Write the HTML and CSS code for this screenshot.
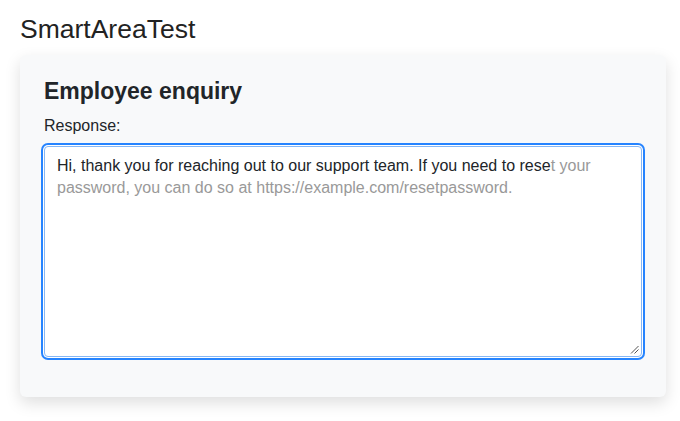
FILE: index.html
```html
<!DOCTYPE html>
<html lang="en">
<head>
<meta charset="utf-8">
<title>SmartAreaTest</title>
<link rel="stylesheet" href="styles.css">
</head>
<body>
<h1 class="page-title">SmartAreaTest</h1>
<div class="card">
  <h2 class="card-title">Employee enquiry</h2>
  <label class="field-label" for="response">Response:</label>
  <div class="smartarea" id="response" role="textbox" aria-multiline="true" tabindex="0"><span class="typed">Hi, thank you for reaching out to our support team. If you need to rese</span><span class="ghost">t your password, you can do so at https://example.com/resetpassword.</span><svg class="grip" width="9" height="9" viewBox="0 0 9 9" aria-hidden="true"><path d="M1 8.5 L8.5 1 M4.5 8.5 L8.5 4.5" stroke="#555" stroke-width="1" fill="none"/></svg></div>
</div>
</body>
</html>
```
FILE: styles.css
```css
html, body {
  margin: 0;
  padding: 0;
  background: #ffffff;
}
body {
  padding: 0 14px 26px 20px;
  font-family: "Liberation Sans", Arial, sans-serif;
  color: #212529;
}
.page-title {
  margin: 14px 0 10px;
  font-size: 26.5px;
  font-weight: normal;
  line-height: normal;
  color: #222222;
}
.card {
  background: #f8f9fa;
  border-radius: 6px;
  padding: 23px 24px 40px;
  box-shadow: 0 6px 16px rgba(0, 0, 0, 0.13);
}
.card-title {
  margin: 0 0 12px;
  font-size: 23px;
  font-weight: bold;
  line-height: normal;
  color: #212529;
}
.field-label {
  display: block;
  font-size: 16px;
  line-height: normal;
  margin-bottom: 11px;
}
.smartarea {
  position: relative;
  box-sizing: border-box;
  height: 211px;
  padding: 8px 12px;
  background: #ffffff;
  border: 1px solid #86b7f5;
  border-radius: 4px;
  box-shadow: 0 0 0 1px #ffffff, 0 0 0 3px #2684ff;
  font-size: 16px;
  line-height: 22.4px;
  outline: none;
}
.typed {
  color: #212529;
}
.ghost {
  color: #999999;
}
.grip {
  position: absolute;
  right: 2px;
  bottom: 2px;
}
```
